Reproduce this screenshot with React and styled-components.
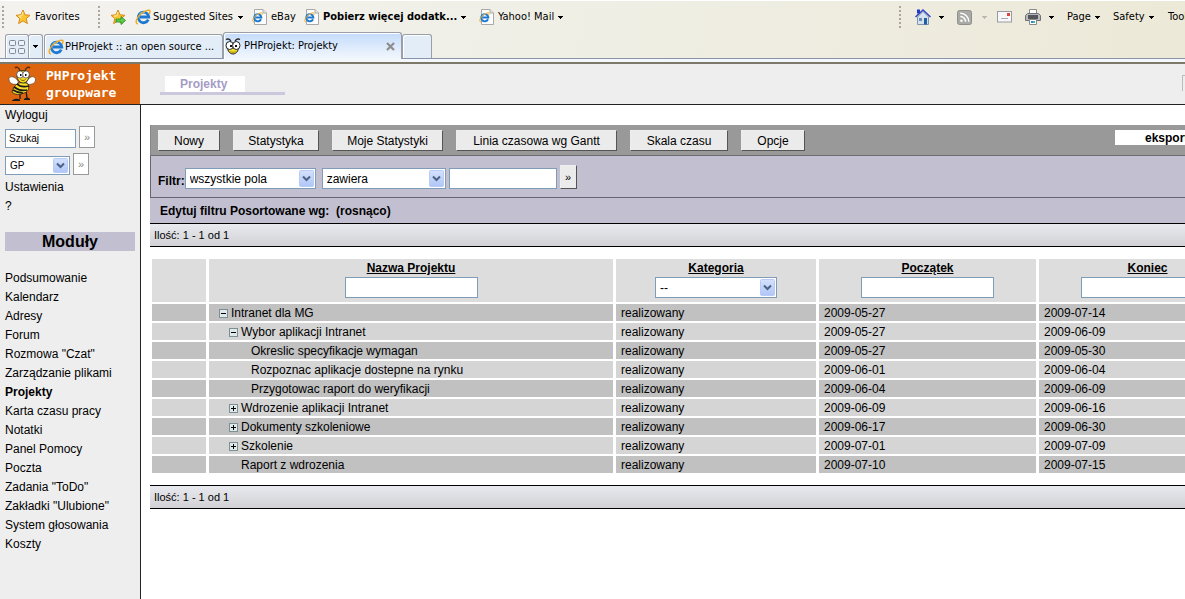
import React from 'react';
import styled, { createGlobalStyle, css } from 'styled-components';

const GlobalStyle = createGlobalStyle`
  body {
    margin: 0;
    background: #fff;
    color: #000;
    font: 12px/16px "Liberation Sans", Arial, sans-serif;
  }

  *, *::before, *::after {
    box-sizing: border-box;
  }

  button, input, select {
    margin: 0;
    font: inherit;
    color: inherit;
  }

  a {
    color: inherit;
    text-decoration: none;
  }
`

const Page = styled.div`
  display: flex;
  flex-direction: column;
  min-height: 100vh;
  overflow: hidden;
`

/* browser bars */

const Chrome = styled.div`
  background: linear-gradient(100deg, #f3f2ef 0%, #f0efe6 45%, #ece9d8 100%);
  border-top: 1px solid #fff;
  font: 11px/16px "DejaVu Sans Condensed", "DejaVu Sans", Tahoma, sans-serif;
`

const LinksBar = styled.div`
  display: flex;
  justify-content: space-between;
  height: 32px;
  white-space: nowrap;
`

const BarGroup = styled.div`
  display: flex;
  align-items: center;
  flex: none;
  width: ${props => props.$width || 'auto'};
  padding-left: ${props => props.$indent || '0'};
  overflow: hidden;
`

const Grip = styled.span`
  flex: none;
  width: 2px;
  height: 22px;
  margin-right: ${props => props.$gap};
  background: repeating-linear-gradient(#aaa69c 0 2px, transparent 2px 4px);
`

const BarButton = styled.button`
  display: flex;
  align-items: center;
  flex: none;
  gap: ${props => props.$gap || '4px'};
  width: ${props => props.$width};
  height: 24px;
  padding: 0;
  border: 0;
  background: none;
  font-weight: ${props => (props.$bold ? 'bold' : 'normal')};
  white-space: nowrap;
`

const TabsBar = styled.div`
  display: flex;
  align-items: flex-end;
  height: 26px;
  padding-left: 5px;
  border-bottom: 1px solid #8a93a8;
`

const tabBox = css`
  height: 24px;
  border: 1px solid #9a9ea8;
  border-bottom: 0;
  border-radius: 3px 3px 0 0;
  background: #e3edf8;
  box-shadow: inset 1px 1px #fff;
`

const QuickTabs = styled.button`
  ${tabBox}
  display: flex;
  align-items: center;
  justify-content: center;
  width: ${props => props.$width};
  margin-right: ${props => props.$gap || '-1px'};
  padding: 0;
`

const Tab = styled.a`
  ${tabBox}
  display: flex;
  align-items: center;
  gap: 1px;
  width: 179px;
  padding: 0 4px 0 3px;
  white-space: nowrap;

  ${props => props.$active && css`
    height: 27px;
    margin-bottom: -1px;
    padding: 0 6px 0 1px;
    gap: 3px;
    background: linear-gradient(#c3dcfb, #f3f7fd);
  `}
`

const TabTitle = styled.span`
  flex: 1;
`

const CloseTab = styled.button`
  display: flex;
  padding: 0;
  border: 0;
  background: none;
`

const NewTab = styled.button`
  ${tabBox}
  width: 30px;
  padding: 0;
`

const Strip = styled.div`
  height: 5px;
  background: #f4f7fc;
  border-bottom: 2px solid #7d796a;
`

/* PHProjekt header */

const Header = styled.header`
  display: flex;
  height: 41px;
  background: #eee;
  border-bottom: 1px solid #222;
`

const Brand = styled.a`
  display: flex;
  align-items: center;
  gap: 9px;
  width: 140px;
  padding-left: 8px;
  background: #de6510;
  color: #fff;
  font: bold 13px/17px "DejaVu Sans Mono", monospace;
`

const SectionTab = styled.div`
  width: 125px;
  height: 19px;
  margin: 12px 0 0 20px;
  padding-left: 5px;
  border-bottom: 3px solid #cbc8dd;
`

const SectionLink = styled.a`
  display: block;
  width: 80px;
  padding-left: 15px;
  background: #fff;
  color: #a49cc4;
  font-weight: bold;
`

const HeaderCorner = styled.div`
  width: 3px;
  height: 16px;
  margin: 11px 0 0 auto;
  border: solid #bbb;
  border-width: 1px 0 0 1px;
`

const Body = styled.div`
  display: flex;
  flex: 1;
`

/* sidebar */

const Sidebar = styled.aside`
  flex: none;
  width: 141px;
  padding: 1px 5px 0;
  background: #eee;
  border-right: 1px solid #222;
`

const SideLink = styled.a`
  display: block;
  line-height: 19px;
  font-weight: ${props => (props.$current ? 'bold' : 'normal')};
`

const SideForm = styled.form`
  display: flex;
  align-items: flex-end;
  gap: 3px;
  margin: 1px 0 ${props => props.$gap};
  font-size: 10px;
`

const ModulesTitle = styled.h2`
  margin: 16px 0 18px;
  background: #c1bfd0;
  font-size: 16px;
  line-height: 19px;
  text-align: center;
`

/* form controls */

const TextBox = styled.input`
  width: ${props => props.$width};
  height: ${props => props.$height || '21px'};
  padding: 0 3px;
  border: 1px solid #7f9db9;
  border-radius: 0;
  background: #fff;
`

const SelectFrame = styled.span`
  position: relative;
  display: inline-block;
  width: ${props => props.$width};
  height: ${props => props.$height || '21px'};
  text-align: left;

  select {
    display: block;
    appearance: none;
    width: 100%;
    height: 100%;
    padding: 0 20px 0 4px;
    border: 1px solid #7f9db9;
    border-radius: 0;
    background: #fff;
    font-weight: normal;
  }

  svg {
    position: absolute;
    top: 2px;
    right: 2px;
    pointer-events: none;
  }
`

const GoButton = styled.button`
  width: ${props => (props.$large ? '17px' : '16px')};
  height: ${props => (props.$large ? '24px' : '22px')};
  padding: 0;
  border: 1px solid #999;
  background: #fff;
  color: #888;
  font-size: 11px;

  ${props => props.$large && css`
    border-color: #eee #555 #555 #eee;
    background: #ebebeb;
    color: #000;
  `}
`

/* content */

const Content = styled.main`
  flex: 1;
  min-width: 0;
  padding: 20px 0 0 8px;
  overflow: hidden;
`

const Panel = styled.div`
  margin-left: 1px;
`

const ActionBar = styled.div`
  display: flex;
  gap: 13px;
  height: 31px;
  padding: 5px 0 0 7px;
  border-left: 1px solid #86868c;
  border-bottom: 1px solid #6c6c72;
  background: #999;
`

const ActionButton = styled.button`
  flex: none;
  width: ${props => props.$width};
  height: 21px;
  padding: 0;
  border: 1px solid;
  border-color: #eee #555 #555 #eee;
  background: #ebebeb;
  white-space: nowrap;
`

const ExportLink = styled.a`
  flex: none;
  width: 70px;
  height: 15px;
  margin-left: auto;
  padding-left: 30px;
  overflow: hidden;
  background: #fff;
  font-weight: bold;
`

const FilterBar = styled.form`
  display: flex;
  align-items: flex-end;
  gap: 3px;
  height: 42px;
  padding: 0 0 8px 7px;
  border: solid #666672;
  border-width: 0 0 1px 1px;
  background: #c1bfd0;
`

const FilterField = styled.div`
  display: flex;
  align-items: flex-end;
  margin-right: 3px;
`

const FilterLabel = styled.label`
  font-weight: bold;
`

const SortBar = styled.div`
  display: flex;
  height: 25px;
  padding: 5px 0 0 10px;
  background: #c1bfd0;
  font-weight: bold;
`

const SortItem = styled.span`
  width: ${props => props.$width || 'auto'};
  white-space: nowrap;
`

const CountBar = styled.div`
  height: 24px;
  padding-left: 4px;
  border: solid #000;
  border-width: 1px 0;
  background: linear-gradient(#e8e9ee, #d2d2d6);
  font-size: 11px;
  line-height: 22px;
`

const Table = styled.table`
  width: 100%;
  min-width: 1110px;
  margin: 10px 0;
  table-layout: fixed;
  border-spacing: 3px 2px;
`

const Col = styled.col`
  width: ${props => props.$width};
`

const HeadCell = styled.th`
  height: 43px;
  padding: 1px 0 0;
  background: #ddd;
  vertical-align: top;

  a {
    display: block;
    margin-bottom: 1px;
    text-decoration: underline;
  }
`

const Row = styled.tr`
  background: #d5d5d5;

  &:nth-child(odd) {
    background: #c1c1c1;
  }
`

const Cell = styled.td`
  height: 17px;
  padding: 1px 5px 0;
  white-space: nowrap;
`

const NameCell = styled(Cell)`
  padding-left: ${props => 10 + props.$level * 10 + (props.$leaf ? 12 : 0)}px;
`

const NameLine = styled.div`
  display: flex;
  align-items: center;
  gap: 3px;
`

const Toggle = styled.button`
  display: flex;
  padding: 0;
  border: 0;
  background: none;
`

/* icons */

const Caret = ({ color = '#000' }) => (
  <svg width="6" height="3" viewBox="0 0 6 3" shapeRendering="crispEdges">
    <path d="M0 0h5v1h-1v1h-1v1h-1v-1h-1v-1h-1z" fill={color} />
  </svg>
)

const StarShape = () => (
  <path
    d="M8 1l2 4.800 5 .500-3.800 3.300 1.200 5-4.400-2.700-4.400 2.700 1.200-5-3.800-3.300 5-.500z"
    fill="#fdc534"
    stroke="#d78a1b"
    strokeLinejoin="round"
  />
)

const StarIcon = () => (
  <svg width="16" height="16" viewBox="0 0 16 16">
    <StarShape />
    <path d="M8 3l-1.200 3.700-3 .400 2.400 2" fill="none" stroke="#fff0a8" />
  </svg>
)

const AddStarIcon = () => (
  <svg width="16" height="16" viewBox="0 0 16 16">
    <StarShape />
    <path d="M8 3l-1.200 3.700-3 .400" fill="none" stroke="#fff0a8" />
    <path d="M6 10h5v-2.500l4.500 4-4.500 4v-2.500h-5z" fill="#5ccb45" stroke="#278a24" strokeWidth=".8" />
  </svg>
)

const IeMark = () => (
  <>
    <path d="M13.300 10.700A5.300 5.300 0 1 1 13.800 8H5" fill="none" stroke="#1c78d0" strokeWidth="2.800" />
    <path d="M4.500 5.500A5 5 0 0 1 10 3.300" fill="none" stroke="#74c4f4" strokeWidth="1.200" />
    <path d="M2.800 15C-.5 14 1.500 8.500 6 4.800S14.800.3 15 2.200c.1.900-.3 1.800-.8 2.600" fill="none" stroke="#f1a91e" strokeWidth="1.400" />
  </>
)

const IeIcon = () => (
  <svg width="16" height="16" viewBox="0 0 16 16"><IeMark /></svg>
)

const PageIcon = () => (
  <svg width="15" height="16" viewBox="0 0 15 16">
    <path d="M2.500.5h8.500l3.500 3.500v11.500h-12z" fill="#fdfdfd" stroke="#a9a9a9" />
    <path d="M11 .5v3.500h3.500" fill="#e4e4e4" stroke="#a9a9a9" />
    <g transform="translate(0 3) scale(.68)"><IeMark /></g>
  </svg>
)

const HomeIcon = () => (
  <svg width="16" height="16" viewBox="0 0 16 16">
    <path d="M2 .5h3v4h-3z" fill="#2438c8" />
    <path d="M2.500 8L8 2.500 13.500 8v7.500h-11z" fill="#d6e2ee" stroke="#8095ad" />
    <path d="M.5 8L8 1l7.500 7" fill="none" stroke="#3345c4" strokeWidth="1.500" />
    <path d="M9 9h3v6.500h-3z" fill="#1f5fa5" />
    <path d="M4 9h3v3h-3z" fill="#6d8db2" />
  </svg>
)

const FeedIcon = () => (
  <svg width="15" height="15" viewBox="0 0 15 15">
    <rect x=".5" y=".5" width="14" height="14" rx="2" fill="#a9a9a5" stroke="#8f8f8b" />
    <circle cx="4.500" cy="10.700" r="1.300" fill="#fff" />
    <path d="M3.300 6.500a5 5 0 0 1 5.200 5.300M3.300 3.300a8.300 8.300 0 0 1 8.500 8.500" fill="none" stroke="#fff" strokeWidth="1.500" />
  </svg>
)

const MailIcon = () => (
  <svg width="15" height="12" viewBox="0 0 15 12">
    <rect x=".5" y=".5" width="14" height="10.500" fill="#f7f7f9" stroke="#9a9aa2" />
    <path d="M4 7.500h7" stroke="#a8a8b0" />
    <path d="M10 2h3v3h-3z" fill="#e0453c" />
  </svg>
)

const PrintIcon = () => (
  <svg width="16" height="16" viewBox="0 0 16 16">
    <path d="M4.500.5h7v5h-7z" fill="#fff" stroke="#8a8a8a" />
    <path d="M.5 6.500l2-2h11l2 2v5h-15z" fill="#b7b9bd" stroke="#6e7075" />
    <path d="M3 6h10v4h-10z" fill="#54565b" />
    <path d="M4.500 10.500h7v5h-7z" fill="#fff" stroke="#8a8a8a" />
    <path d="M6 12h2v2h-2z" fill="#2c86d8" />
    <path d="M8 12h2v2h-2z" fill="#49b7a6" />
  </svg>
)

const QuickTabsIcon = () => (
  <svg width="16" height="14" viewBox="0 0 16 14" fill="#eef1f6" stroke="#7c8798">
    <rect x=".5" y=".5" width="6" height="5" rx="1" />
    <rect x="9.500" y=".5" width="6" height="5" rx="1" />
    <rect x=".5" y="8.500" width="6" height="5" rx="1" />
    <rect x="9.500" y="8.500" width="6" height="5" rx="1" />
  </svg>
)

const BeeFaceIcon = () => (
  <svg width="16" height="17" viewBox="0 0 16 17">
    <path d="M1 1.500c2-1 4-.500 5 2M15 1.500c-2-1-4-.500-5 2" fill="none" stroke="#222" strokeWidth="1.300" />
    <path d="M2.500 9c0-4 11-4 11 0 0 4-2.500 7-5.500 7s-5.500-3-5.500-7z" fill="#f5e02c" stroke="#222" />
    <ellipse cx="4.700" cy="7.500" rx="3.700" ry="4" fill="#fff" stroke="#222" />
    <ellipse cx="11.300" cy="7.500" rx="3.700" ry="4" fill="#fff" stroke="#222" />
    <path d="M5 7h2v2h-2zM10 7h2v2h-2z" fill="#111" />
    <path d="M5.500 13.500c1.500 1 3.500 1 5 0" fill="none" stroke="#a88a10" />
  </svg>
)

const CloseIcon = () => (
  <svg width="9" height="9" viewBox="0 0 9 9">
    <path d="M1 1l7 7M8 1l-7 7" stroke="#8d8d8d" strokeWidth="2.200" />
  </svg>
)

const BeeLogo = () => (
  <svg width="29" height="36" viewBox="0 0 29 36">
    <path d="M12 5C11 1 8 .5 7 2M17 5c1-4 4-4.500 5-3" fill="none" stroke="#5a2a08" strokeWidth="1.400" />
    <path d="M10 15C6 9 0 10 1 14s5 5 9 4zM19 15c3-6 9-5 8.500-1s-5 5-9 4z" fill="#fff" stroke="#5b5048" strokeWidth=".7" />
    <path d="M12 26v7M18 25l1 7" stroke="#1a1a1a" strokeWidth="1.300" />
    <path d="M4 34.500c2-2 6-2 8-1v1.500H4zM16 33c2-2 5-1.500 6 0v1h-6z" fill="#1a1a1a" />
    <path d="M9 18c3-2 8-2 11 0 2 4 0 8-4 9-5 2-9 2-12-1 1-4 3-6 5-8z" fill="#f9df2b" stroke="#1a1a1a" strokeWidth=".8" />
    <path d="M9 18c3 3 8 3 12 2M6 21c4 3 9 4 13 3M5 24c3 2 6 3 10 3" fill="none" stroke="#1a1a1a" strokeWidth="1.700" />
    <path d="M9 9c0-6 12-6 12 0 0 5-3 8-6 8s-6-3-6-8z" fill="#f9df2b" stroke="#1a1a1a" strokeWidth=".8" />
    <ellipse cx="12" cy="8.500" rx="3.300" ry="3.600" fill="#fff" stroke="#444" strokeWidth=".7" />
    <ellipse cx="18" cy="8.500" rx="3.300" ry="3.600" fill="#fff" stroke="#444" strokeWidth=".7" />
    <path d="M12 8h1.500v2H12zM17 8h1.500v2H17z" fill="#111" />
    <path d="M12.500 13.500c1.500 1.300 3.500 1.300 5 0" fill="none" stroke="#7a5a08" />
  </svg>
)

const DropArrow = ({ height }) => (
  <svg width="15" height={height} viewBox={`0 0 15 ${height}`}>
    <defs>
      <linearGradient id="drop" x2="0" y2="1">
        <stop offset="0" stopColor="#d5e1fd" />
        <stop offset="1" stopColor="#afc6f7" />
      </linearGradient>
    </defs>
    <rect x=".5" y=".5" width="14" height={height - 1} rx="1" fill="url(#drop)" stroke="#b8cbf6" />
    <path d={`M4 ${height / 2 - 2}l3.500 3.500 3.500-3.500`} fill="none" stroke="#4d6185" strokeWidth="2" />
  </svg>
)

const ToggleIcon = ({ open }) => (
  <svg width="9" height="9" viewBox="0 0 9 9">
    <rect x=".5" y=".5" width="8" height="8" fill="#dfe9ec" stroke="#7b8f94" />
    <path d={open ? 'M2 4.500h5' : 'M2 4.500h5M4.500 2v5'} stroke="#000" />
  </svg>
)

const Dropdown = ({ label, value, width, height = 21 }) => (
  <SelectFrame $width={width} $height={`${height}px`}>
    <select aria-label={label} defaultValue={value}>
      <option>{value}</option>
    </select>
    <DropArrow height={height - 4} />
  </SelectFrame>
)

const modules = [
  'Podsumowanie', 'Kalendarz', 'Adresy', 'Forum', 'Rozmowa "Czat"',
  'Zarządzanie plikami', 'Projekty', 'Karta czasu pracy', 'Notatki',
  'Panel Pomocy', 'Poczta', 'Zadania "ToDo"', 'Zakładki "Ulubione"',
  'System głosowania', 'Koszty',
]

const actions = [
  ['Nowy', '62px'],
  ['Statystyka', '86px'],
  ['Moje Statystyki', '111px'],
  ['Linia czasowa wg Gantt', '161px'],
  ['Skala czasu', '98px'],
  ['Opcje', '64px'],
]

const projects = [
  { name: 'Intranet dla MG', level: 0, toggle: 'open', start: '2009-05-27', end: '2009-07-14' },
  { name: 'Wybor aplikacji Intranet', level: 1, toggle: 'open', start: '2009-05-27', end: '2009-06-09' },
  { name: 'Okreslic specyfikacje wymagan', level: 2, start: '2009-05-27', end: '2009-05-30' },
  { name: 'Rozpoznac aplikacje dostepne na rynku', level: 2, start: '2009-06-01', end: '2009-06-04' },
  { name: 'Przygotowac raport do weryfikacji', level: 2, start: '2009-06-04', end: '2009-06-09' },
  { name: 'Wdrozenie aplikacji Intranet', level: 1, toggle: 'closed', start: '2009-06-09', end: '2009-06-16' },
  { name: 'Dokumenty szkoleniowe', level: 1, toggle: 'closed', start: '2009-06-17', end: '2009-06-30' },
  { name: 'Szkolenie', level: 1, toggle: 'closed', start: '2009-07-01', end: '2009-07-09' },
  { name: 'Raport z wdrozenia', level: 1, start: '2009-07-10', end: '2009-07-15' },
]

const BrowserBars = () => (
  <Chrome>
    <LinksBar>
      <BarGroup $indent="2px">
        <Grip $gap="11px" />
        <BarButton $width="83px"><StarIcon />Favorites</BarButton>
        <Grip $gap="10px" />
        <BarButton $width="25px" aria-label="Add to Favorites Bar"><AddStarIcon /></BarButton>
        <BarButton $width="117px" $gap="2px"><IeIcon />Suggested Sites&nbsp;<Caret /></BarButton>
        <BarButton $width="52px"><PageIcon />eBay</BarButton>
        <BarButton $width="175px" $bold><PageIcon />Pobierz więcej dodatk...<Caret /></BarButton>
        <BarButton $width="90px"><PageIcon />Yahoo! Mail<Caret /></BarButton>
      </BarGroup>
      <BarGroup $width="286px">
        <Grip $gap="14px" />
        <BarButton $width="42px" $gap="8px" aria-label="Home"><HomeIcon /><Caret /></BarButton>
        <BarButton $width="40px" $gap="10px" aria-label="Feeds"><FeedIcon /><Caret color="#bbb8ac" /></BarButton>
        <BarButton $width="28px" aria-label="Read mail"><MailIcon /></BarButton>
        <BarButton $width="42px" $gap="8px" aria-label="Print"><PrintIcon /><Caret /></BarButton>
        <BarButton $width="46px">Page<Caret /></BarButton>
        <BarButton $width="55px">Safety<Caret /></BarButton>
        <BarButton $width="50px">Tools<Caret /></BarButton>
      </BarGroup>
    </LinksBar>
    <TabsBar>
      <QuickTabs $width="24px" aria-label="Quick Tabs"><QuickTabsIcon /></QuickTabs>
      <QuickTabs $width="15px" $gap="1px" aria-label="Tab list"><Caret /></QuickTabs>
      <Tab href="#"><IeIcon /><TabTitle>PHProjekt :: an open source ...</TabTitle></Tab>
      <Tab href="#" $active>
        <BeeFaceIcon />
        <TabTitle>PHProjekt: Projekty</TabTitle>
        <CloseTab aria-label="Close Tab"><CloseIcon /></CloseTab>
      </Tab>
      <NewTab aria-label="New Tab" />
    </TabsBar>
    <Strip />
  </Chrome>
)

const Menu = () => (
  <Sidebar>
    <SideLink href="#">Wyloguj</SideLink>
    <SideForm $gap="5px">
      <TextBox $width="71px" $height="19px" aria-label="Szukaj" defaultValue="Szukaj" />
      <GoButton type="button">»</GoButton>
    </SideForm>
    <SideForm $gap="3px">
      <Dropdown label="Grupa" value="GP" width="65px" height={19} />
      <GoButton type="button">»</GoButton>
    </SideForm>
    <SideLink href="#">Ustawienia</SideLink>
    <SideLink href="#">?</SideLink>
    <ModulesTitle>Moduły</ModulesTitle>
    <nav>
      {modules.map(name => (
        <SideLink key={name} href="#" $current={name === 'Projekty'}>{name}</SideLink>
      ))}
    </nav>
  </Sidebar>
)

const ProjectTable = () => (
  <Table>
    <colgroup>
      <Col $width="54px" />
      <Col $width="404px" />
      <Col $width="200px" />
      <Col $width="217px" />
      <Col />
    </colgroup>
    <thead>
      <tr>
        <HeadCell />
        <HeadCell><a href="#">Nazwa Projektu</a><TextBox $width="133px" aria-label="Nazwa Projektu" /></HeadCell>
        <HeadCell><a href="#">Kategoria</a><Dropdown label="Kategoria" value="--" width="122px" /></HeadCell>
        <HeadCell><a href="#">Początek</a><TextBox $width="133px" aria-label="Początek" /></HeadCell>
        <HeadCell><a href="#">Koniec</a><TextBox $width="133px" aria-label="Koniec" /></HeadCell>
      </tr>
    </thead>
    <tbody>
      {projects.map(project => (
        <Row key={project.name}>
          <Cell />
          <NameCell $level={project.level} $leaf={!project.toggle}>
            <NameLine>
              {project.toggle && (
                <Toggle aria-label={project.name}><ToggleIcon open={project.toggle === 'open'} /></Toggle>
              )}
              {project.name}
            </NameLine>
          </NameCell>
          <Cell>realizowany</Cell>
          <Cell>{project.start}</Cell>
          <Cell>{project.end}</Cell>
        </Row>
      ))}
    </tbody>
  </Table>
)

const App = () => (
  <Page>
    <GlobalStyle />
    <BrowserBars />
    <Header>
      <Brand href="#"><BeeLogo /><span>PHProjekt<br />groupware</span></Brand>
      <SectionTab><SectionLink href="#">Projekty</SectionLink></SectionTab>
      <HeaderCorner />
    </Header>
    <Body>
      <Menu />
      <Content>
        <Panel>
          <ActionBar>
            {actions.map(([name, width]) => (
              <ActionButton key={name} $width={width}>{name}</ActionButton>
            ))}
            <ExportLink href="#">eksport</ExportLink>
          </ActionBar>
          <FilterBar>
            <FilterField>
              <FilterLabel htmlFor="phrase">Filtr:</FilterLabel>
              <Dropdown label="Pole" value="wszystkie pola" width="131px" />
            </FilterField>
            <Dropdown label="Warunek" value="zawiera" width="124px" />
            <TextBox id="phrase" $width="108px" />
            <GoButton type="button" $large>»</GoButton>
          </FilterBar>
          <SortBar>
            <SortItem $width="70px">Edytuj filtru</SortItem>
            <SortItem $width="106px">Posortowane wg:</SortItem>
            <SortItem>(rosnąco)</SortItem>
          </SortBar>
          <CountBar>Ilość: 1 - 1 od 1</CountBar>
        </Panel>
        <ProjectTable />
        <Panel>
          <CountBar>Ilość: 1 - 1 od 1</CountBar>
        </Panel>
      </Content>
    </Body>
  </Page>
)

export default App
